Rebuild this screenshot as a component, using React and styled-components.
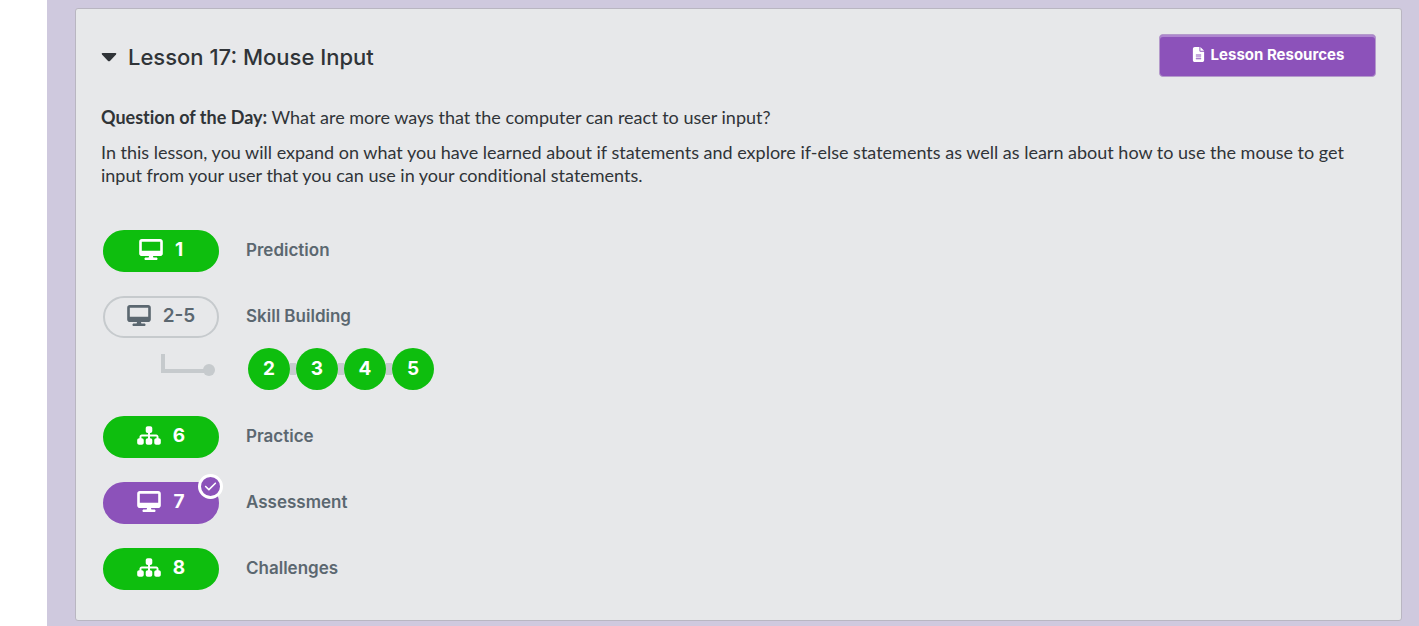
import React, { useState } from "react";
import styled, { createGlobalStyle, css } from "styled-components";
import { FaCheck, FaDesktop, FaFileLines, FaSitemap } from "react-icons/fa6";

const colors = {
  page: "#cfc9de",
  card: "#e7e8ea",
  cardBorder: "#b9b6c1",
  text: "#303438",
  muted: "#5b6770",
  line: "#c6cacd",
  green: "#0ebe0e",
  purple: "#8c52ba",
};

const GlobalStyle = createGlobalStyle`
  *, *::before, *::after { box-sizing: border-box; }
  body {
    margin: 0;
    background: #fff;
    color: ${colors.text};
    font-family: Inter, "Noto Sans", sans-serif;
    font-size: 16px;
    line-height: 23px;
  }
`;

const Page = styled.main`
  min-height: 100vh;
  margin-left: 47px;
  padding: 8px 17px 5px 28px;
  background: ${colors.page};
`;

const LessonCard = styled.section`
  padding: 25px 25px 30px;
  background: ${colors.card};
  border: 1px solid ${colors.cardBorder};
  border-radius: 3px;
`;

const Header = styled.header`
  display: flex;
  align-items: flex-start;
  justify-content: space-between;
`;

const Title = styled.h2`
  margin: 8px 0 0;
  font-size: 22px;
  line-height: 30px;
  font-weight: 500;
`;

const TitleToggle = styled.button`
  display: flex;
  align-items: center;
  gap: 11px;
  padding: 0;
  border: 0;
  background: none;
  color: inherit;
  font: inherit;
  cursor: pointer;
`;

const Caret = styled.svg`
  width: 16px;
  height: 10px;
  transform: ${(p) => (p.$open ? "none" : "rotate(-90deg)")};
`;

const ResourcesButton = styled.button`
  display: flex;
  align-items: center;
  justify-content: center;
  gap: 5px;
  width: 217px;
  height: 43px;
  padding: 0 0 2px;
  border: 1px solid #b49acb;
  border-radius: 4px;
  background: ${colors.purple};
  box-shadow: inset 0 2px 0 #ae86cf;
  color: #fff;
  font-family: inherit;
  font-size: 15px;
  font-weight: 700;
  cursor: pointer;
`;

const Description = styled.div`
  margin-top: 29px;
  font-family: Lato, sans-serif;
  font-size: 18px;
  font-variant-ligatures: none;

  p {
    margin: 0 0 12px;
  }

  strong {
    font-weight: 700;
  }
`;

const Levels = styled.ul`
  display: flex;
  flex-direction: column;
  gap: 24px;
  margin: 43px 0 0;
  padding: 0 2px;
  list-style: none;
`;

const LevelRow = styled.div`
  display: flex;
  align-items: center;
  gap: 27px;
`;

const Pill = styled.a`
  position: relative;
  display: flex;
  align-items: center;
  justify-content: center;
  gap: 12px;
  width: 116px;
  height: 42px;
  padding-bottom: 3px;
  border: 2px solid ${(p) => p.$fill};
  border-radius: 21px;
  background: ${(p) => p.$fill};
  color: #fff;
  font-size: 19px;
  font-weight: 700;
  text-decoration: none;

  svg {
    width: 24px;
    height: 21px;
  }

  ${(p) =>
    p.$outlined &&
    css`
      border-color: ${colors.line};
      background: transparent;
      color: ${colors.muted};
      font-weight: 600;
    `}
`;

const CheckBadge = styled.span`
  position: absolute;
  top: -10px;
  right: -6px;
  display: grid;
  place-items: center;
  width: 25px;
  height: 25px;
  border: 3px solid #fff;
  border-radius: 50%;
  background: ${colors.purple};

  svg {
    width: 13px;
    height: 13px;
  }
`;

const LevelName = styled.span`
  padding-bottom: 2px;
  color: ${colors.muted};
  font-size: 17px;
  font-weight: 600;
`;

const Progression = styled.div`
  display: flex;
  align-items: center;
  gap: 32px;
  padding: 10px 0 2px 58px;
`;

const Connector = styled.svg`
  width: 55px;
  height: 30px;
`;

const Bubbles = styled.ol`
  display: flex;
  margin: 0;
  padding: 0;
  list-style: none;

  li {
    display: flex;
    align-items: center;
  }

  li + li::before {
    content: "";
    width: 6px;
    height: 12px;
    background: ${colors.line};
  }
`;

const Bubble = styled.a`
  display: flex;
  align-items: center;
  justify-content: center;
  width: 42px;
  height: 42px;
  padding-bottom: 1px;
  border-radius: 50%;
  background: ${colors.green};
  color: #fff;
  font-size: 19px;
  font-weight: 700;
  text-decoration: none;
`;

const levels = [
  { range: "1", name: "Prediction", icon: FaDesktop },
  { range: "2-5", name: "Skill Building", icon: FaDesktop, bubbles: [2, 3, 4, 5] },
  { range: "6", name: "Practice", icon: FaSitemap },
  { range: "7", name: "Assessment", icon: FaDesktop, assessment: true },
  { range: "8", name: "Challenges", icon: FaSitemap },
];

function Level({ range, name, icon: Icon, bubbles, assessment }) {
  return (
    <li>
      <LevelRow>
        <Pill
          href={`#level-${range}`}
          $fill={assessment ? colors.purple : colors.green}
          $outlined={Boolean(bubbles)}
        >
          <Icon aria-hidden="true" />
          {range}
          {assessment && (
            <CheckBadge>
              <FaCheck aria-hidden="true" />
            </CheckBadge>
          )}
        </Pill>
        <LevelName>{name}</LevelName>
      </LevelRow>
      {bubbles && (
        <Progression>
          <Connector viewBox="0 0 55 30" aria-hidden="true">
            <path d="M2 0v17h44" fill="none" stroke={colors.line} strokeWidth="4" />
            <circle cx="48" cy="16" r="6" fill={colors.line} />
          </Connector>
          <Bubbles>
            {bubbles.map((n) => (
              <li key={n}>
                <Bubble href={`#level-${n}`}>{n}</Bubble>
              </li>
            ))}
          </Bubbles>
        </Progression>
      )}
    </li>
  );
}

export default function App() {
  const [open, setOpen] = useState(true);
  return (
    <>
      <GlobalStyle />
      <Page>
        <LessonCard>
          <Header>
            <Title>
              <TitleToggle aria-expanded={open} onClick={() => setOpen(!open)}>
                <Caret $open={open} viewBox="0 0 16 10" aria-hidden="true">
                  <path d="M1.5 1h13q1.5.3.5 1.6l-5.8 6.1q-1.2 1.1-2.4 0L1 2.6Q0 1.3 1.5 1z" fill="currentColor" />
                </Caret>
                Lesson 17: Mouse Input
              </TitleToggle>
            </Title>
            <ResourcesButton>
              <FaFileLines aria-hidden="true" />
              Lesson Resources
            </ResourcesButton>
          </Header>
          {open && (
            <>
              <Description>
                <p>
                  <strong>Question of the Day:</strong> What are more ways that the computer can
                  react to user input?
                </p>
                <p>
                  In this lesson, you will expand on what you have learned about if statements and
                  explore if-else statements as well as learn about how to use the mouse to get
                  input from your user that you can use in your conditional statements.
                </p>
              </Description>
              <Levels>
                {levels.map((level) => (
                  <Level key={level.range} {...level} />
                ))}
              </Levels>
            </>
          )}
        </LessonCard>
      </Page>
    </>
  );
}
